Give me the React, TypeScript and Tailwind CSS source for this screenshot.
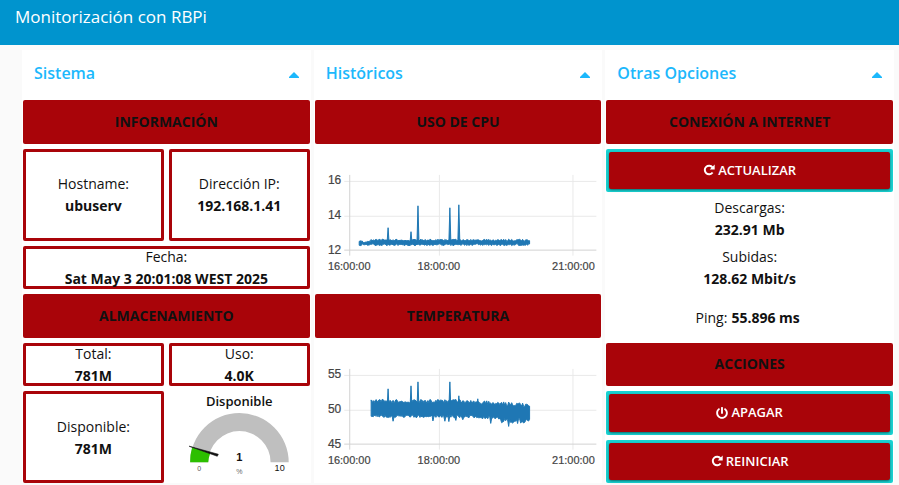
import type { ReactNode } from "react";
import { FaPowerOff } from "react-icons/fa";

/** Deterministic noise in the range 0..1 */
function noise(n: number): number {
  const v = Math.sin(n * 127.1 + 11.7) * 43758.5453;
  return v - Math.floor(v);
}

type Spike = { x: number; top: number };

const cpuSpikes: Spike[] = [
  { x: 73, top: 79 },
  { x: 96, top: 83 },
  { x: 103, top: 57 },
  { x: 135, top: 59 },
  { x: 144, top: 56 },
];

const tempSpikes: Spike[] = [
  { x: 73, top: 46 },
  { x: 96, top: 43 },
  { x: 103, top: 39 },
  { x: 135, top: 39 },
  { x: 144, top: 53 },
  { x: 163, top: 56 },
];

/** Closed outline of a dense series: upper edge forwards, lower edge back */
function envelope(
  from: number,
  to: number,
  upper: (x: number) => number,
  lower: (x: number) => number,
): string {
  const top: string[] = [];
  const bottom: string[] = [];
  for (let x = from; x <= to; x += 1) {
    top.push(`${x},${upper(x)}`);
    bottom.unshift(`${x},${lower(x)}`);
  }
  return [...top, ...bottom].join(" ");
}

const cpuPoints = envelope(
  44,
  215,
  (x) => (x < 56 ? 92 : 90.5) + noise(x) * 2,
  (x) => 95 + noise(x + 300) * 2,
);

function tempSag(x: number): number {
  return x > 145 ? (x - 145) / 18 : 0;
}

const tempPoints = envelope(
  56,
  215,
  (x) => 56.5 + tempSag(x) + noise(x) * 4,
  (x) =>
    72 +
    tempSag(x) +
    noise(x + 500) * 3 +
    (noise(x + 900) > 0.93 ? 4 : 0) +
    (x > 187 && noise(x + 70) > 0.4 ? 3 : 0),
);

function Chart({
  name,
  labels,
  points,
  spikes,
  base,
}: {
  name: string;
  labels: string[];
  points: string;
  spikes: Spike[];
  base: number;
}) {
  return (
    <svg
      viewBox="0 0 287 141"
      className="h-full w-full"
      role="img"
      aria-label={name}
    >
      <g fill="none" stroke="#e9e9e9" strokeWidth="1">
        <path d="M29 32.5H282M29 67.5H282M124.5 26V107M258.5 26V107" />
        <path d="M29 101.5H282M34.5 26V107" stroke="#d2d2d2" />
      </g>
      <polygon
        points={points}
        fill="#1f77b4"
        stroke="#1f77b4"
        strokeWidth="1"
        strokeLinejoin="round"
      />
      {spikes.map((s) => (
        <path
          key={s.x}
          d={`M${s.x - 1} ${base}L${s.x} ${s.top}L${s.x + 1} ${base}`}
          fill="#1f77b4"
          stroke="#1f77b4"
          strokeWidth="1"
        />
      ))}
      <g
        className="font-['Liberation_Sans',Arial,sans-serif] text-[12px]"
        fill="#444444"
        stroke="#444444"
        strokeWidth="0.2"
      >
        {labels.map((label, i) => (
          <text key={label} x="26" y={35 + i * 35} textAnchor="end">
            {label}
          </text>
        ))}
      </g>
      <g
        className="font-['Liberation_Sans',Arial,sans-serif] text-[11px]"
        fill="#444444"
        stroke="#444444"
        strokeWidth="0.2"
        textAnchor="middle"
      >
        <text x="34" y="121">16:00:00</text>
        <text x="124" y="121">18:00:00</text>
        <text x="259" y="121">21:00:00</text>
      </g>
    </svg>
  );
}

function Gauge() {
  return (
    <figure className="row-span-2 flex flex-col items-center">
      <figcaption className="text-[13px] leading-5 font-semibold">
        Disponible
      </figcaption>
      <svg
        viewBox="0 0 140 70"
        className="w-full"
        role="img"
        aria-label="Disponible: 1 %"
      >
        <path
          d="M21 51A49 49 0 0 1 119 51H101A31 31 0 0 0 39 51Z"
          fill="#bfbfbf"
        />
        <path d="M21 51A49 49 0 0 1 23 36L41 42A31 31 0 0 0 39 51Z" fill="#2cbf00" />
        <path d="M20 35L49 43L48 45Z" fill="#111111" stroke="#111111" strokeWidth="0.6" />
        <g
          className="font-['Liberation_Sans',Arial,sans-serif]"
          textAnchor="middle"
          fill="#111111"
        >
          <text x="70" y="50" className="text-[11px] font-bold">1</text>
          <text x="110" y="60" className="text-[9px]">10</text>
          <text x="30" y="60" className="text-[7px]" fill="#555555">0</text>
          <text x="70" y="63" className="text-[7px]" fill="#666666">%</text>
        </g>
      </svg>
    </figure>
  );
}

function Panel({ title, children }: { title: string; children: ReactNode }) {
  return (
    <section className="bg-white px-px">
      <div className="flex h-[50px] items-center justify-between pr-[11px] pb-1 pl-[11px] text-[#1cb8fc]">
        <h2 className="text-base font-semibold">{title}</h2>
        <button type="button" aria-label={`Contraer ${title}`} className="pt-1">
          <svg viewBox="0 0 10 6" className="h-[6px] w-[10px]" fill="currentColor">
            <path d="M0 6V5L5 0L10 5V6Z" />
          </svg>
        </button>
      </div>
      <div className="grid h-[383px] grid-cols-2 grid-rows-8 gap-[5px]">
        {children}
      </div>
    </section>
  );
}

function Heading({ children }: { children: ReactNode }) {
  return (
    <h3 className="col-span-2 flex items-center justify-center rounded-[2px] bg-[#a90409] text-sm font-bold">
      {children}
    </h3>
  );
}

function Stat({
  label,
  value,
  className,
}: {
  label: string;
  value: string;
  className: string;
}) {
  return (
    <p
      className={`flex flex-col items-center justify-center pt-px text-sm leading-[22px] ${className}`}
    >
      <span>{label}</span>
      <strong className="font-bold">{value}</strong>
    </p>
  );
}

function RedoIcon() {
  return (
    <svg viewBox="0 0 12 12" className="size-3" fill="none" aria-hidden="true">
      <path
        d="M9.5 3.4A4.3 4.3 0 1 0 9.6 8.5"
        stroke="currentColor"
        strokeWidth="2"
      />
      <path d="M11.7 0.4V5.4H6.7Z" fill="currentColor" />
    </svg>
  );
}

function Action({ icon, children }: { icon: ReactNode; children: ReactNode }) {
  return (
    <div className="col-span-2 flex rounded-[2px] bg-[#19d2d2] p-[3px]">
      <button
        type="button"
        className="flex flex-1 items-center justify-center gap-[3px] rounded-[2px] bg-[#a90409] text-[13px] font-semibold text-white shadow-sm shadow-black/40"
      >
        {icon}
        {children}
      </button>
    </div>
  );
}

const box = "rounded-[2px] border-[3px] border-[#a90409]";

export default function App() {
  return (
    <div className="min-h-screen bg-[#fafafa] font-['Open_Sans','Noto_Sans',sans-serif] text-[#111111]">
      <header className="h-[45px] bg-[#0094ce] px-[15px] pt-1 text-white">
        <h1 className="text-[17px] leading-[26px]">Monitorización con RBPi</h1>
      </header>
      <main className="grid grid-cols-3 gap-[3px] pt-[5px] pr-[5px] pl-[22px]">
        <Panel title="Sistema">
          <Heading>INFORMACIÓN</Heading>
          <Stat label="Hostname:" value="ubuserv" className={`row-span-2 ${box}`} />
          <Stat label="Dirección IP:" value="192.168.1.41" className={`row-span-2 ${box}`} />
          <Stat
            label="Fecha:"
            value="Sat May 3 20:01:08 WEST 2025"
            className={`col-span-2 ${box}`}
          />
          <Heading>ALMACENAMIENTO</Heading>
          <Stat label="Total:" value="781M" className={box} />
          <Stat label="Uso:" value="4.0K" className={box} />
          <Stat label="Disponible:" value="781M" className={`row-span-2 ${box}`} />
          <Gauge />
        </Panel>
        <Panel title="Históricos">
          <Heading>USO DE CPU</Heading>
          <div className="col-span-2 row-span-3">
            <Chart
              name="Uso de CPU"
              labels={["16", "14", "12"]}
              points={cpuPoints}
              spikes={cpuSpikes}
              base={94}
            />
          </div>
          <Heading>TEMPERATURA</Heading>
          <div className="col-span-2 row-span-3">
            <Chart
              name="Temperatura"
              labels={["55", "50", "45"]}
              points={tempPoints}
              spikes={tempSpikes}
              base={66}
            />
          </div>
        </Panel>
        <Panel title="Otras Opciones">
          <Heading>CONEXIÓN A INTERNET</Heading>
          <Action icon={<RedoIcon />}>ACTUALIZAR</Action>
          <Stat label="Descargas:" value="232.91 Mb" className="col-span-2" />
          <Stat label="Subidas:" value="128.62 Mbit/s" className="col-span-2" />
          <p className="col-span-2 flex items-center justify-center gap-1 pt-1 pr-1 text-sm">
            Ping: <strong className="font-bold">55.896 ms</strong>
          </p>
          <Heading>ACCIONES</Heading>
          <Action icon={<FaPowerOff className="size-3" />}>APAGAR</Action>
          <Action icon={<RedoIcon />}>REINICIAR</Action>
        </Panel>
      </main>
    </div>
  );
}
